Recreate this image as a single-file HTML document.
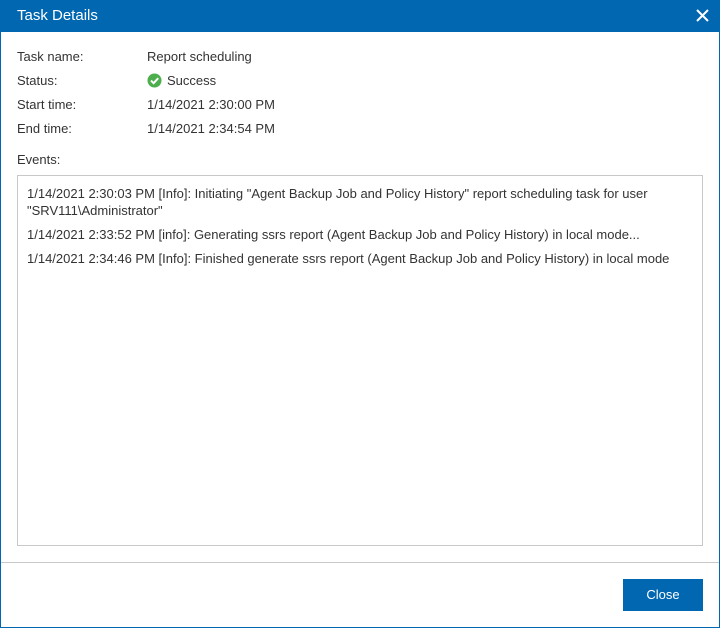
<!DOCTYPE html>
<html><head><meta charset="utf-8"><style>
html,body{margin:0;padding:0;}
body{width:720px;height:628px;position:relative;background:#fff;font-family:"Liberation Sans",sans-serif;font-size:13px;color:#333;overflow:hidden;}
.frame{position:absolute;left:0;top:0;width:718px;height:626px;border:1px solid #0067b0;}
.hdr{position:absolute;left:0;top:0;width:720px;height:32px;background:#0067b0;color:#fff;}
.hdr .t{position:absolute;left:17px;top:7px;font-size:15px;}
.lbl{position:absolute;left:17px;}
.val{position:absolute;left:147px;}
.box{position:absolute;left:17px;top:175px;width:684px;height:369px;border:1px solid #c8c8c8;}
.ev{position:absolute;left:27px;line-height:17px;}
.sep{position:absolute;left:1px;top:562px;width:718px;height:1px;background:#c8c8c8;}
.btn{position:absolute;left:623px;top:579px;width:80px;height:32px;background:#0067b0;color:#fff;text-align:center;line-height:32px;font-size:13px;}
</style></head><body>
<div class="frame"></div>
<div class="hdr"><span class="t">Task Details</span>
<svg style="position:absolute;left:696px;top:9px" width="13" height="13" viewBox="0 0 13 13"><path d="M1 1L12 12M12 1L1 12" stroke="#fff" stroke-width="2"/></svg></div>
<div class="lbl" style="top:49px">Task name:</div><div class="val" style="top:49px">Report scheduling</div>
<div class="lbl" style="top:73px">Status:</div>
<svg style="position:absolute;left:147px;top:73px" width="15" height="15" viewBox="0 0 15 15"><circle cx="7.5" cy="7.5" r="7" fill="#4cae4c"/><path d="M4 7.6L6.6 10.2L11.2 5.2" stroke="#fff" stroke-width="2" fill="none"/></svg>
<div class="val" style="top:73px;left:167px">Success</div>
<div class="lbl" style="top:97px">Start time:</div><div class="val" style="top:97px">1/14/2021 2:30:00 PM</div>
<div class="lbl" style="top:121px">End time:</div><div class="val" style="top:121px">1/14/2021 2:34:54 PM</div>
<div class="lbl" style="top:152px">Events:</div>
<div class="box"></div>
<div class="ev" style="top:185px">1/14/2021 2:30:03 PM [Info]: Initiating "Agent Backup Job and Policy History" report scheduling task for user<br>"SRV111\Administrator"</div>
<div class="ev" style="top:226px">1/14/2021 2:33:52 PM [info]: Generating ssrs report (Agent Backup Job and Policy History) in local mode...</div>
<div class="ev" style="top:250px">1/14/2021 2:34:46 PM [Info]: Finished generate ssrs report (Agent Backup Job and Policy History) in local mode</div>
<div class="sep"></div>
<div class="btn">Close</div>
</body></html>
